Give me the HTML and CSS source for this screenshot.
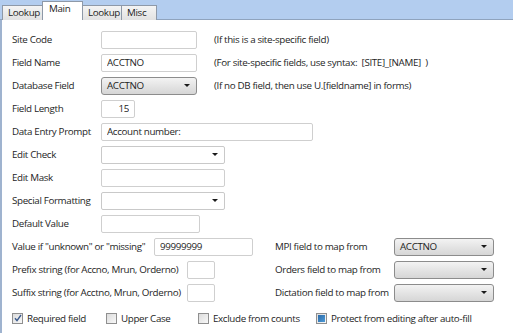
FILE: index.html
```html
<!DOCTYPE html>
<html lang="en">
<head>
  <meta charset="UTF-8" />
  <title>Field Definition</title>
  <link rel="stylesheet" href="styles.css">
</head>
<body>
  <div class="tabstrip">
    <div class="tab t1">Lookup</div>
    <div class="tab active t2">Main</div>
    <div class="tab t3">Lookup</div>
    <div class="tab t4">Misc</div>
  </div>

  <div class="panel">
    <div class="row">
      <label class="lbl">Site Code</label>
      <input class="box w96" type="text">
      <span class="hint">(If this is a site-specific field)</span>
    </div>
    <div class="row">
      <label class="lbl">Field Name</label>
      <input class="box w96" type="text" value="ACCTNO">
      <span class="hint">(For site-specific fields, use syntax:&nbsp; [SITE]_[NAME]&nbsp; )</span>
    </div>
    <div class="row">
      <label class="lbl">Database Field</label>
      <div class="combo gray w96">ACCTNO<span class="arrow"></span></div>
      <span class="hint">(If no DB field, then use U.[fieldname] in forms)</span>
    </div>
    <div class="row">
      <label class="lbl">Field Length</label>
      <input class="box w34 num" type="text" value="15">
    </div>
    <div class="row">
      <label class="lbl">Data Entry Prompt</label>
      <input class="box w212" type="text" value="Account number:">
    </div>
    <div class="row">
      <label class="lbl">Edit Check</label>
      <div class="combo w124"><span class="arrow"></span></div>
    </div>
    <div class="row">
      <label class="lbl">Edit Mask</label>
      <input class="box w124" type="text">
    </div>
    <div class="row">
      <label class="lbl">Special Formatting</label>
      <div class="combo w124"><span class="arrow"></span></div>
    </div>
    <div class="row">
      <label class="lbl">Default Value</label>
      <input class="box w99" type="text">
    </div>

    <div class="pair">
      <div class="row">
        <label class="lbl-long">Value if "unknown" or "missing"</label>
        <input class="box w99" type="text" value="99999999">
      </div>
      <div class="row right">
        <label class="lbl-map">MPI field to map from</label>
        <div class="combo gray w100">ACCTNO<span class="arrow"></span></div>
      </div>
    </div>
    <div class="pair">
      <div class="row">
        <label class="lbl-fix">Prefix string (for Accno, Mrun, Orderno)</label>
        <input class="box w28" type="text">
      </div>
      <div class="row right">
        <label class="lbl-map">Orders field to map from</label>
        <div class="combo gray w100"><span class="arrow"></span></div>
      </div>
    </div>
    <div class="pair">
      <div class="row">
        <label class="lbl-fix">Suffix string (for Acctno, Mrun, Orderno)</label>
        <input class="box w28" type="text">
      </div>
      <div class="row right">
        <label class="lbl-map">Dictation field to map from</label>
        <div class="combo gray w100"><span class="arrow"></span></div>
      </div>
    </div>

    <div class="checks">
      <div class="check c1"><span class="cb"><svg width="8" height="8" viewBox="0 0 8 8"><path d="M1 4.2 L3 6.6 L7 1" fill="none" stroke="#3b5a8c" stroke-width="1.4"/></svg></span>Required field</div>
      <div class="check c2"><span class="cb"></span>Upper Case</div>
      <div class="check c3"><span class="cb"></span>Exclude from counts</div>
      <div class="check"><span class="cb"><span class="dot"></span></span>Protect from editing after auto-fill</div>
    </div>
  </div>
</body>
</html>
```

FILE: styles.css
```css
* {
  box-sizing: border-box;
  margin: 0;
  padding: 0;
}

body {
  font-family: "Open Sans", Arial, sans-serif;
  font-size: 9.8px;
  letter-spacing: -0.35px;
  color: #1e1e1e;
  background-color: #fff;
  width: 513px;
  height: 333px;
  overflow: hidden;
}

label, .hint, .check {
  white-space: nowrap;
  flex-shrink: 0;
}

.tabstrip {
  height: 20px;
  background-color: #b3cdef;
  border-bottom: 1px solid #8fa3bd;
  display: flex;
  align-items: flex-end;
  padding-left: 2px;
}

.tab {
  height: 15px;
  margin-bottom: -1px;
  background: linear-gradient(#f4f4f4, #e2e2e2);
  border: 1px solid #8e99a8;
  border-bottom: none;
  line-height: 14px;
  padding-left: 5px;
}

.tab + .tab {
  margin-left: -1px;
}

.t1 { width: 41px; }
.t2 { width: 41px; }
.t3 { width: 40px; }
.t4 { width: 36px; }

.tab.active {
  height: 19px;
  background: #fff;
  line-height: 14px;
  padding-left: 6px;
  position: relative;
  z-index: 1;
}

.panel {
  height: 313px;
  border-left: 2px solid #9fb3cf;
  padding: 8px 0 0 10px;
}

.row {
  display: flex;
  align-items: center;
  height: 23px;
}

.lbl {
  width: 89px;
}

.lbl-long {
  width: 142px;
}

.lbl-fix {
  width: 175px;
}

.lbl-map {
  width: 119px;
}

.hint {
  margin-left: 17px;
}

.box {
  height: 18px;
  flex-shrink: 0;
  border: 1px solid #cfcfcf;
  border-radius: 2px;
  font: inherit;
  letter-spacing: inherit;
  color: #1e1e1e;
  padding: 0 5px;
  background: #fff;
}

.num {
  text-align: right;
}

.combo {
  height: 18px;
  flex-shrink: 0;
  border: 1px solid #c9c9c9;
  border-radius: 2px;
  background: #fff;
  padding: 0 5px;
  display: flex;
  align-items: center;
  justify-content: space-between;
  line-height: 16px;
}

.combo .arrow {
  width: 0;
  height: 0;
  margin-left: auto;
  margin-right: 1px;
  border-left: 3px solid transparent;
  border-right: 3px solid transparent;
  border-top: 3px solid #1a1a1a;
}

.combo.gray {
  border: 1px solid #8c8c8c;
  border-radius: 3px;
  background: linear-gradient(#f3f3f3, #e4e4e4 50%, #d6d6d6);
}

.w28 { width: 28px; }
.w34 { width: 34px; }
.w96 { width: 96px; }
.w99 { width: 99px; }
.w100 { width: 100px; }
.w124 { width: 124px; }
.w212 { width: 212px; }

.pair {
  display: flex;
}

.pair > .row:first-child {
  width: 263px;
}

.checks {
  display: flex;
  align-items: center;
  height: 20px;
  margin-top: 4px;
}

.check {
  display: flex;
  align-items: center;
}

.c1 { width: 94px; }
.c2 { width: 92px; }
.c3 { width: 118px; }

.cb {
  width: 11px;
  height: 11px;
  border: 1px solid #8f8f8f;
  background: linear-gradient(135deg, #dcdcdc, #f8f8f8);
  margin-right: 4px;
  display: flex;
  align-items: center;
  justify-content: center;
}

.cb .dot {
  width: 7px;
  height: 7px;
  background: linear-gradient(135deg, #2c6aa8, #4c9ad6);
}
```
